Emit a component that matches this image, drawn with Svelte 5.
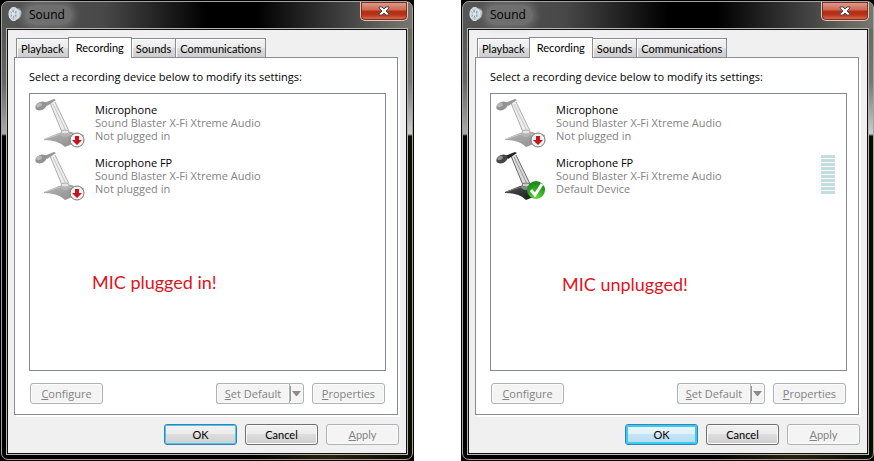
<script lang="ts">
  type Device = { name: string; status: string; ready: boolean };

  const tabs = ['Playback', 'Recording', 'Sounds', 'Communications'];

  const dialogs: { note: string; focused: boolean; devices: Device[] }[] = [
    {
      note: 'MIC plugged in!',
      focused: false,
      devices: [
        { name: 'Microphone', status: 'Not plugged in', ready: false },
        { name: 'Microphone FP', status: 'Not plugged in', ready: false },
      ],
    },
    {
      note: 'MIC unplugged!',
      focused: true,
      devices: [
        { name: 'Microphone', status: 'Not plugged in', ready: false },
        { name: 'Microphone FP', status: 'Default Device', ready: true },
      ],
    },
  ];

  let active = $state(['Recording', 'Recording']);
</script>

<svg class="defs" width="0" height="0" aria-hidden="true">
  <defs>
    <linearGradient id="base" x2="1" y2="1">
      <stop offset="0" stop-color="#b4b4b4" />
      <stop offset="1" stop-color="#8c8c8c" />
    </linearGradient>
    <linearGradient id="base-dark" x2="1" y2="1">
      <stop offset="0" stop-color="#555" />
      <stop offset="1" stop-color="#111" />
    </linearGradient>
    <radialGradient id="ok-badge" cx=".5" cy=".9" r=".9">
      <stop offset="0" stop-color="#5fdc3c" />
      <stop offset=".6" stop-color="#28a321" />
      <stop offset="1" stop-color="#168317" />
    </radialGradient>
  </defs>
</svg>

{#snippet mic(ready: boolean)}
  <svg class="mic" viewBox="0 0 50 50" aria-hidden="true">
    <path d="M8 43 23 37Q33 34 38 37L48 39 46 44 29 51Q22 44 8 44Z" fill={ready ? 'url(#base-dark)' : 'url(#base)'} />
    <path d="M9 43 24 38 44 39" stroke={ready ? '#777' : '#cacaca'} fill="none" />
    <ellipse cx="29" cy="38" rx="5" ry="3" fill={ready ? '#888' : '#b5b5b5'} />
    <path d="M14 7 19 6 33 36 26 37Z" fill={ready ? '#dcdcdc' : '#ececec'} />
    <path d="M14 7 26 36M19 6 33 35" stroke={ready ? '#666' : '#adadad'} fill="none" />
    <path d="M17 8 30 35" stroke={ready ? '#999' : '#c8c8c8'} fill="none" />
    <ellipse cx="29" cy="36" rx="4" ry="2" fill={ready ? '#ccc' : '#e6e6e6'} stroke={ready ? '#777' : '#b0b0b0'} />
    <path d="M8 7 18 3 20 4 11 10Z" fill={ready ? '#222' : '#969696'} />
    <ellipse cx="5" cy="10" rx="6" ry="4" transform="rotate(-25 5 10)" fill={ready ? '#444' : '#929292'} />
    <ellipse cx="3" cy="9" rx="3" ry="2" transform="rotate(-25 3 9)" fill={ready ? '#909090' : '#b8b8b8'} />
    {#if ready}
      <circle cx="39" cy="41" r="9" fill="url(#ok-badge)" />
      <path d="M34 41 38 46 45 35" stroke="#fff" stroke-width="3" fill="none" />
    {:else}
      <circle cx="41" cy="44" r="7" fill="#f2f2f2" stroke="#777" />
      <path d="M39 40H43V44H46L41 49 36 44H39Z" fill="#c4161c" />
    {/if}
  </svg>
{/snippet}

<main>
  {#each dialogs as dialog, d}
    <section class="window" aria-label="Sound">
      <div class="frame">
        <header>
          <svg class="speaker" viewBox="0 0 16 16" aria-hidden="true">
            <path d="M7 1 13 2 15 7 13 12 8 15Z" fill="#7c8790" />
            <path d="M10 2 14 5 13 11 10 14Z" fill="#cbd4da" />
            <ellipse cx="6" cy="8" rx="5" ry="7" fill="#c3cfd8" stroke="#eef3f6" />
            <ellipse cx="6" cy="8" rx="3" ry="4" fill="#94a5b3" />
            <path d="M3 4 8 12M8 3 4 12M2 8H10" stroke="#edf4f8" />
            <circle cx="6" cy="8" r="1.5" fill="#dfe8ee" />
          </svg>
          <h1>Sound</h1>
          <button class="close" aria-label="Close">
            <svg viewBox="0 0 12 10" aria-hidden="true">
              <path d="M1 1H4L6 3 8 1H11V2L8 5 11 8V9H8L6 7 4 9H1V8L4 5 1 2Z" fill="#fff" stroke="#4b4b5c" />
            </svg>
          </button>
        </header>
        <div class="client">
          <div class="tabs" role="tablist">
            {#each tabs as tab}
              <button
                role="tab"
                class="tab"
                class:active={active[d] === tab}
                aria-selected={active[d] === tab}
                onclick={() => (active[d] = tab)}>{tab}</button>
            {/each}
          </div>
          <div class="panel">
            <p>Select a recording device below to modify its settings:</p>
            <ul>
              {#each dialog.devices as device}
                <li>
                  {@render mic(device.ready)}
                  <div class="info">
                    <strong>{device.name}</strong>
                    <span>Sound Blaster X-Fi Xtreme Audio</span>
                    <span>{device.status}</span>
                  </div>
                  {#if device.ready}
                    <div class="meter"></div>
                  {/if}
                </li>
              {/each}
              <li class="note" class:shifted={d === 1}>{dialog.note}</li>
            </ul>
            <div class="actions">
              <button disabled><u>C</u>onfigure</button>
              <div class="split">
                <button disabled><u>S</u>et Default</button>
                <button class="drop" disabled aria-label="Set Default options">
                  <svg viewBox="0 0 9 5" aria-hidden="true"><path d="M0 0H9L5 5H4Z" fill="#8a8a8a" /></svg>
                </button>
              </div>
              <button disabled><u>P</u>roperties</button>
            </div>
          </div>
          <footer>
            <button class="default" class:focused={dialog.focused}>OK</button>
            <button>Cancel</button>
            <button disabled><u>A</u>pply</button>
          </footer>
        </div>
      </div>
    </section>
  {/each}
</main>

<style>
  :global(body) {
    background: #fff;
    overflow: hidden;
  }
  .defs {
    position: absolute;
  }
  main {
    display: grid;
    grid-template-columns: 1fr 1fr;
    gap: 47px;
    margin-right: -1px;
    font: 11px/13px "Open Sans", "Noto Sans", sans-serif;
    color: #000;
  }
  .window {
    background: #000;
    padding: 1px;
  }
  .frame {
    border: 1px solid #a3a39f;
    border-radius: 7px;
    padding: 0 4px 4px;
    background:
      linear-gradient(90deg, #555 0, #484848 25%, #000 50%, #000 62%, #484848 86%, #68675d 94%, #77766c 100%) 0 0 / 100% 27px no-repeat,
      linear-gradient(#555, #666 50%, #aaa 98%, #000) 0 27px / 5px 107px no-repeat,
      linear-gradient(#68685f, #777 50%, #ccc 98%, #221c08) 100% 27px / 5px 107px no-repeat,
      linear-gradient(90deg, #000 60%, #2a220a 80%, #0c0b02);
  }
  header {
    display: flex;
    align-items: flex-start;
    height: 26px;
    padding-left: 2px;
  }
  .speaker {
    width: 15px;
    height: 16px;
    margin-top: 4px;
  }
  h1 {
    margin: 3px 0 0 2px;
    padding: 0 7px 0 4px;
    font-size: 12px;
    line-height: 20px;
    font-weight: 400;
    border-radius: 10px;
    background: rgba(160, 160, 160, .4);
    box-shadow: 0 0 7px 3px rgba(160, 160, 160, .4);
  }
  button {
    box-sizing: border-box;
    width: 73px;
    height: 21px;
    padding: 0;
    border: 1px solid #707070;
    border-radius: 3px;
    background: linear-gradient(#f2f2f2, #ebebeb 50%, #ddd 50%, #cfcfcf);
    box-shadow: inset 0 0 0 1px #fbfbfb;
    font: inherit;
    color: #000;
  }
  button:disabled {
    border-color: #adb2b5;
    background: #f4f4f4;
    color: #838383;
  }
  .close {
    display: grid;
    place-items: center;
    width: 48px;
    height: 19px;
    margin: 0 0 0 auto;
    border: 1px solid #ddc5bd;
    border-top: 0;
    border-radius: 0 0 5px 5px;
    background: linear-gradient(#e0a092, #cb6852 45%, #b32d13 50%, #b93216 70%, #da745a);
    box-shadow: inset 0 0 0 1px #7c3024;
  }
  .close svg {
    width: 12px;
    height: 10px;
  }
  .client {
    border: 1px solid #b5b5b2;
    outline: 1px solid #111;
    outline-offset: -2px;
    padding: 8px 8px 9px 7px;
    background: #f0f0f0;
  }
  .tabs {
    display: flex;
    align-items: flex-end;
    height: 20px;
    padding-left: 1px;
    font-family: Lato, sans-serif;
  }
  .tab {
    width: auto;
    height: 19px;
    margin-left: -1px;
    padding: 0 4px;
    border-color: #898c95;
    border-bottom: 0;
    border-radius: 0;
    background: linear-gradient(#f3f3f3, #ebebeb 50%, #ddd 50%, #cdcdcd);
    box-shadow: inset 1px 1px #fff;
  }
  .tab:first-child {
    margin-left: 1px;
  }
  .tab.active {
    position: relative;
    height: 21px;
    margin-bottom: -1px;
    padding: 0 7px 2px;
    background: #fff;
  }
  .panel {
    margin-right: 1px;
    padding: 12px 11px 10px 14px;
    border: 1px solid #898c95;
    background: #fff;
    box-shadow: 2px 2px #fff;
  }
  p {
    margin: 0 0 10px;
  }
  ul {
    position: relative;
    min-height: 274px;
    margin: 0;
    padding: 2px 0 0;
    border: 1px solid #828790;
    list-style: none;
  }
  li {
    display: flex;
    height: 53px;
    padding-left: 6px;
  }
  .mic {
    width: 50px;
    height: 50px;
    overflow: visible;
  }
  .info {
    display: flex;
    flex-direction: column;
    padding: 7px 0 0 9px;
    color: #838383;
  }
  strong {
    font-weight: 400;
    color: #000;
  }
  .meter {
    width: 14px;
    height: 39px;
    margin: 6px 11px 0 auto;
    background: repeating-linear-gradient(#c3dce1 0 3px, #fff 3px 4px);
  }
  .note {
    position: absolute;
    top: 176px;
    left: 56px;
    height: auto;
    font: 18px/24px Lato, sans-serif;
    color: #e0131d;
  }
  .note.shifted {
    top: 178px;
    left: 65px;
  }
  .actions {
    display: flex;
    gap: 8px;
    margin-top: 12px;
    padding: 0 1px;
  }
  .split {
    display: flex;
    margin-left: auto;
  }
  .split button {
    border-right: 0;
    border-radius: 3px 0 0 3px;
  }
  .split .drop {
    position: relative;
    width: 15px;
    border-right: 1px solid #adb2b5;
    border-radius: 0 3px 3px 0;
  }
  .drop::before {
    content: "";
    position: absolute;
    inset: 2px auto 2px 0;
    border-left: 1px solid #999;
  }
  .drop svg {
    display: block;
    width: 9px;
    height: 5px;
    margin: 0 auto;
  }
  footer {
    display: flex;
    justify-content: flex-end;
    gap: 8px;
    padding-top: 9px;
    font-family: Lato, sans-serif;
  }
  .default {
    border-color: #3c7fb1;
    box-shadow: inset 0 0 0 1px #48c8ee;
  }
  .focused {
    background: linear-gradient(#eef7fc, #dff1fa 50%, #c5e4f4 50%, #b4dcf0);
    box-shadow: inset 0 0 0 2px #35ccf5;
  }
</style>
